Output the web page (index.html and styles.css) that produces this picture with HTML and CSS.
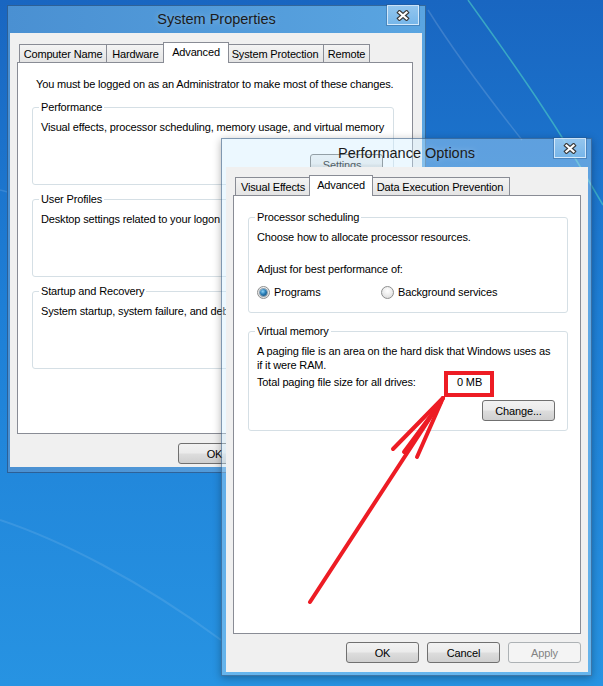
FILE: index.html
```html
<!DOCTYPE html>
<html>
<head>
<meta charset="utf-8">
<title>System Properties</title>
<link rel="stylesheet" href="styles.css">
</head>
<body>
<div class="desktop">
  <svg class="wallpaper" width="603" height="686" viewBox="0 0 603 686">
    <path d="M468 0 C 505 52 548 110 603 205" fill="none" stroke="#4fd0c4" stroke-opacity="0.6" stroke-width="1.5"/>
    <path d="M428 10 C 458 58 492 102 522 140" fill="none" stroke="#ffffff" stroke-opacity="0.15" stroke-width="1.5"/>
    <path d="M0 190 C 40 200 120 230 221 280" fill="none" stroke="#ffffff" stroke-opacity="0.12" stroke-width="1.5"/>
    <path d="M0 520 C 60 540 140 580 221 640" fill="none" stroke="#ffffff" stroke-opacity="0.1" stroke-width="2"/>
  </svg>

  <div class="window win-sys">
    <div class="titlebar">
      <span class="title">System Properties</span>
      <div class="close">
        <svg width="14" height="11" viewBox="0 0 14 11"><path d="M3.5 2.5 L10.5 8.5 M10.5 2.5 L3.5 8.5" stroke="#3a3a3a" stroke-width="4.4" stroke-linecap="square"/><path d="M3.5 2.5 L10.5 8.5 M10.5 2.5 L3.5 8.5" stroke="#ffffff" stroke-width="2.2" stroke-linecap="square"/></svg>
      </div>
    </div>
    <div class="client">
      <div class="tabs">
        <div class="tab t-cn">Computer Name</div>
        <div class="tab t-hw">Hardware</div>
        <div class="tab sel t-adv1">Advanced</div>
        <div class="tab t-sp">System Protection</div>
        <div class="tab t-rm">Remote</div>
      </div>
      <div class="panel">
        <div class="intro">You must be logged on as an Administrator to make most of these changes.</div>
        <fieldset class="group">
          <legend>Performance</legend>
          <div class="gtext">Visual effects, processor scheduling, memory usage, and virtual memory</div>
          <div class="btn gbtn">Settings...</div>
        </fieldset>
        <fieldset class="group">
          <legend>User Profiles</legend>
          <div class="gtext">Desktop settings related to your logon</div>
          <div class="btn gbtn">Settings...</div>
        </fieldset>
        <fieldset class="group">
          <legend>Startup and Recovery</legend>
          <div class="gtext">System startup, system failure, and debugging information</div>
          <div class="btn gbtn">Settings...</div>
        </fieldset>
      </div>
      <div class="buttons">
        <div class="btn">OK</div>
        <div class="btn">Cancel</div>
        <div class="btn">Apply</div>
      </div>
    </div>
  </div>

  <div class="window win-perf">
    <div class="titlebar">
      <span class="title">Performance Options</span>
      <div class="close">
        <svg width="14" height="11" viewBox="0 0 14 11"><path d="M3.5 2.5 L10.5 8.5 M10.5 2.5 L3.5 8.5" stroke="#3a3a3a" stroke-width="4.4" stroke-linecap="square"/><path d="M3.5 2.5 L10.5 8.5 M10.5 2.5 L3.5 8.5" stroke="#ffffff" stroke-width="2.2" stroke-linecap="square"/></svg>
      </div>
    </div>
    <div class="client">
      <div class="tabs">
        <div class="tab t-ve">Visual Effects</div>
        <div class="tab sel t-adv2">Advanced</div>
        <div class="tab t-dep">Data Execution Prevention</div>
      </div>
      <div class="panel">
        <fieldset class="group g-proc">
          <legend>Processor scheduling</legend>
          <div class="gtext">Choose how to allocate processor resources.</div>
          <div class="adjust">Adjust for best performance of:</div>
          <div class="radios">
            <div class="ropt"><span class="radio on"></span><span>Programs</span></div>
            <div class="ropt"><span class="radio"></span><span>Background services</span></div>
          </div>
        </fieldset>
        <fieldset class="group g-vm">
          <legend>Virtual memory</legend>
          <div class="gtext">A paging file is an area on the hard disk that Windows uses as<br>if it were RAM.</div>
          <div class="total"><span>Total paging file size for all drives:</span><span>0 MB</span></div>
          <div class="btn change">Change...</div>
        </fieldset>
      </div>
      <div class="buttons">
        <div class="btn">OK</div>
        <div class="btn">Cancel</div>
        <div class="btn disabled">Apply</div>
      </div>
    </div>
  </div>

  <div class="highlight"></div>
  <svg class="arrow" width="603" height="686" viewBox="0 0 603 686">
    <g stroke="#ed1c24" stroke-width="4" stroke-linecap="round" fill="none">
      <path d="M310 602 L443 398"/>
      <path d="M393 449 L443 398"/>
      <path d="M417 457 L443 398"/>
      <path d="M404 452 L441 402"/>
    </g>
  </svg>
</div>
</body>
</html>
```
FILE: styles.css
```css
body {
  margin: 0;
}

.desktop {
  position: relative;
  width: 603px;
  height: 686px;
  overflow: hidden;
  background: linear-gradient(to bottom, #1966c1 0%, #1e7fd6 45%, #2793e2 100%);
  font-family: "Liberation Sans", Arial, sans-serif;
  font-size: 11px;
  letter-spacing: -0.15px;
  color: #000;
}

.wallpaper {
  position: absolute;
  left: 0;
  top: 0;
}

.window {
  position: absolute;
  box-sizing: border-box;
  display: flex;
  flex-direction: column;
  box-shadow: inset 0 0 0 1px rgba(20, 55, 100, 0.55);
}

.win-sys {
  left: 7px;
  top: 5px;
  width: 419px;
  height: 468px;
  background: linear-gradient(to right, #4a90d2, #5aa5e1);
}

.win-perf {
  left: 221px;
  top: 138px;
  width: 371px;
  height: 538px;
  background: rgba(205, 236, 255, 0.38);
  box-shadow: inset 0 0 0 1px rgba(20, 55, 100, 0.5), 0 2px 8px rgba(0, 0, 0, 0.3);
}

.titlebar {
  display: grid;
  grid-template-columns: 1fr auto 1fr;
  align-items: center;
}

.win-sys .titlebar {
  height: 28px;
}

.win-perf .titlebar {
  height: 29px;
}

.title {
  grid-column: 2;
  font-size: 14.5px;
  letter-spacing: 0;
  color: #1b1b1b;
  text-shadow: 0 0 6px rgba(255, 255, 255, 0.35);
}

.close {
  grid-column: 3;
  justify-self: end;
  align-self: start;
  box-sizing: border-box;
  width: 32px;
  height: 20px;
  display: flex;
  align-items: center;
  justify-content: center;
  background: linear-gradient(rgba(170, 212, 244, 0.7), rgba(130, 190, 238, 0.7));
  border: 1px solid rgba(235, 246, 255, 0.75);
  box-shadow: 0 0 0 1px rgba(40, 80, 125, 0.35);
}

.win-sys .close {
  margin-right: 7px;
}

.win-perf .close {
  margin-right: 6px;
}

.client {
  flex: 1;
  background: #f0f0f0;
  display: flex;
  flex-direction: column;
  padding-left: 7px;
}

.win-sys .client {
  margin: 0 4px 6px 3px;
  padding-top: 9px;
}

.win-perf .client {
  margin: 0 4px 4px 5px;
  padding-top: 8px;
}

.tabs {
  display: flex;
  align-items: flex-end;
  height: 20px;
  padding-left: 2px;
}

.tab {
  box-sizing: border-box;
  height: 18px;
  border: 1px solid #898c95;
  border-bottom: none;
  margin-left: -1px;
  background: linear-gradient(#f4f4f4, #e4e4e4);
  text-align: center;
  line-height: 18px;
  white-space: nowrap;
}

.tab:first-child {
  margin-left: 0;
}

.tab.sel {
  position: relative;
  z-index: 1;
  height: 21px;
  margin: 0 -2px -1px -2px;
  background: #ffffff;
  line-height: 18px;
}

.t-cn { width: 88px; }
.t-hw { width: 59px; }
.t-adv1 { width: 66px; }
.t-sp { width: 98px; }
.t-rm { width: 47px; }

.t-ve { width: 76px; }
.t-adv2 { width: 64px; }
.t-dep { width: 140px; }

.panel {
  box-sizing: border-box;
  border: 1px solid #898c95;
  background: #ffffff;
  padding: 14px 0 0 14px;
}

.win-sys .panel {
  width: 396px;
  height: 372px;
}

.win-perf .panel {
  width: 348px;
  height: 439px;
}

.intro {
  line-height: 14px;
  margin-left: 4px;
  margin-bottom: 9px;
  white-space: nowrap;
}

.group {
  box-sizing: border-box;
  margin: 0;
  border: 1px solid #d5dfe5;
  border-radius: 3px;
  padding: 0 8px;
  display: flex;
  flex-direction: column;
  min-width: 0;
}

.group legend {
  padding: 0 2px;
  margin-left: -2px;
  line-height: 14px;
}

.win-sys .group {
  width: 362px;
  height: 85px;
}

.win-sys .group + .group {
  margin-top: 7px;
}

.gtext {
  margin-top: 6px;
  line-height: 14px;
  white-space: nowrap;
}

.gbtn {
  align-self: flex-end;
  margin-top: 20px;
  margin-right: 2px;
}

.g-proc {
  width: 320px;
  height: 103px;
}

.g-vm {
  width: 320px;
  height: 107px;
  margin-top: 11px !important;
}

.adjust {
  margin-top: 18px;
  line-height: 14px;
}

.radios {
  margin-top: 9px;
  display: grid;
  grid-template-columns: 124px auto;
  line-height: 14px;
}

.ropt {
  display: flex;
  align-items: center;
  gap: 4px;
}

.radio {
  box-sizing: border-box;
  width: 13px;
  height: 13px;
  border-radius: 50%;
  border: 1px solid #8e8f8f;
  background: radial-gradient(circle at 50% 35%, #ffffff 0%, #f0f0f0 40%, #d6d6d6 100%);
  display: flex;
  align-items: center;
  justify-content: center;
}

.radio.on::after {
  content: "";
  width: 7px;
  height: 7px;
  border-radius: 50%;
  background: radial-gradient(circle at 40% 35%, #8fd3f7 0%, #2a7fb8 45%, #0f3f66 100%);
  box-shadow: 0 0 0 1px rgba(40, 80, 110, 0.5);
}

.total {
  margin-top: 3px;
  display: grid;
  grid-template-columns: 200px auto;
  line-height: 14px;
}

.change {
  align-self: flex-end;
  margin-top: 11px;
  margin-right: 4px;
}

.btn {
  box-sizing: border-box;
  width: 73px;
  height: 21px;
  border: 1px solid #707070;
  border-radius: 3px;
  background: linear-gradient(#f2f2f2 0%, #ebebeb 48%, #dddddd 52%, #cfcfcf 100%);
  display: flex;
  align-items: center;
  justify-content: center;
  flex: none;
}

.btn.disabled {
  border-color: #adb2b5;
  background: #f4f4f4;
  color: #838383;
}

.buttons {
  display: flex;
  justify-content: flex-end;
  gap: 8px;
}

.win-sys .buttons {
  width: 396px;
  margin-top: 9px;
}

.win-perf .buttons {
  width: 348px;
  margin-top: 8px;
}

.highlight {
  position: absolute;
  left: 444px;
  top: 371px;
  width: 50px;
  height: 26px;
  box-sizing: border-box;
  border: 4px solid #ed1c24;
}

.arrow {
  position: absolute;
  left: 0;
  top: 0;
  pointer-events: none;
}
```
